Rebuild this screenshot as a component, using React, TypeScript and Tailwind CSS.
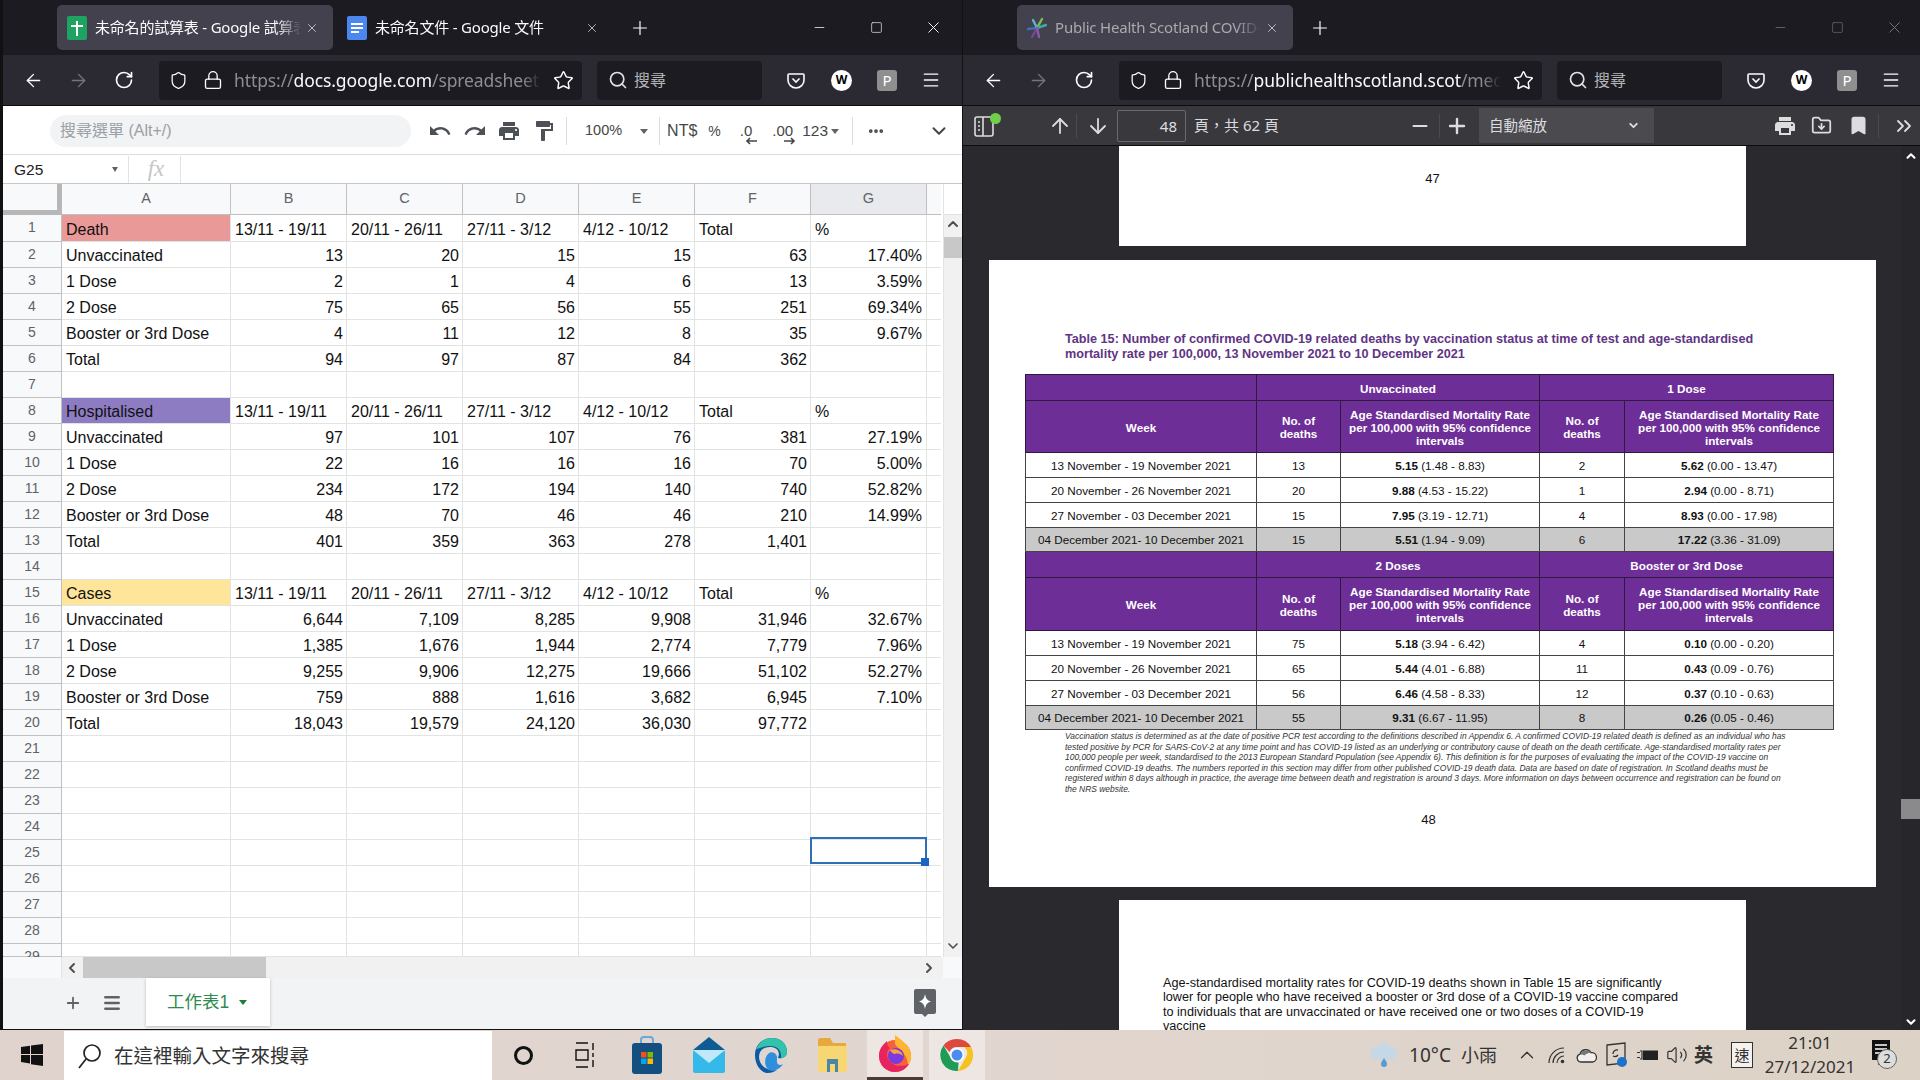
import React from "react";
import {
  ArrowLeft, ArrowRight, RotateCw, Shield, Lock, Star, Search, Menu, Plus, Minus, X, Square,
  MoreHorizontal, ChevronDown, ChevronUp, ChevronLeft, ChevronRight,
  ArrowUp, ArrowDown, Bookmark, ChevronsRight, FolderDown, Volume2,
} from "lucide-react";

const UI = "font-['Noto_Sans','Noto_Sans_CJK_TC',sans-serif]";
const ARIAL = "font-['Liberation_Sans','Noto_Sans_CJK_TC',sans-serif]";

const Mat = ({ d, className, size = 24, fill = "#4d5156" }: { d: string; className?: string; size?: number; fill?: string }) => (
  <svg width={size} height={size} viewBox="0 0 24 24" fill={fill} className={className}><path d={d} /></svg>
);
const UNDO = "M12.5 8c-2.65 0-5.05.99-6.9 2.6L2 7v9h9l-3.62-3.62c1.39-1.16 3.16-1.88 5.12-1.88 3.54 0 6.55 2.31 7.6 5.5l2.37-.78C21.08 11.03 17.15 8 12.5 8z";
const REDO = "M18.4 10.6C16.55 8.99 14.15 8 11.5 8c-4.65 0-8.58 3.03-9.96 7.22L3.9 16c1.05-3.19 4.05-5.5 7.6-5.5 1.95 0 3.73.72 5.12 1.88L13 16h9V7l-3.6 3.6z";
const PRINT = "M19 8H5c-1.66 0-3 1.34-3 3v6h4v4h12v-4h4v-6c0-1.66-1.34-3-3-3zm-3 11H8v-5h8v5zm3-7c-.55 0-1-.45-1-1s.45-1 1-1 1 .45 1 1-.45 1-1 1zm-1-9H6v4h12V3z";
const PAINT = "M18 4V3c0-.55-.45-1-1-1H5c-.55 0-1 .45-1 1v4c0 .55.45 1 1 1h12c.55 0 1-.45 1-1V6h1v4H9v11c0 .55.45 1 1 1h2c.55 0 1-.45 1-1v-9h8V4h-3z";

const Pocket = () => (
  <svg width="18" height="18" viewBox="0 0 18 18" fill="none" stroke="#fbfbfe" strokeWidth="1.6">
    <path d="M2 3h14a1 1 0 0 1 1 1v5a8 8 0 0 1-16 0V4a1 1 0 0 1 1-1z" />
    <path d="M5.5 7.5 9 11l3.5-3.5" />
  </svg>
);

const SheetsIcon = () => (
  <svg width="20" height="24" viewBox="0 0 20 24">
    <rect width="20" height="24" rx="2" fill="#1ea362" />
    <path d="M10 5v15M4 10h12" stroke="#fff" strokeWidth="2" />
  </svg>
);
const DocsIcon = () => (
  <svg width="20" height="24" viewBox="0 0 20 24">
    <rect width="20" height="24" rx="2" fill="#4b87ee" />
    <path d="M4 8h12M4 12h12M4 16h8" stroke="#fff" strokeWidth="2" />
  </svg>
);
const PhsIcon = () => (
  <svg width="20" height="22" viewBox="0 0 20 22" strokeWidth="2.4" fill="none" strokeLinecap="round">
    <path d="M10 11 15 2" stroke="#7bbf4c" />
    <path d="M10 11 19 8" stroke="#3fa9a6" />
    <path d="M10 11 1 12" stroke="#3f6fb0" />
    <path d="M10 11 6 3" stroke="#5db5c9" />
    <path d="M10 11 5 20" stroke="#6d4a9c" />
    <path d="M10 11 12 20" stroke="#8a5aa8" />
  </svg>
);

function Chrome({ children, dim, url }: { children: React.ReactNode; dim?: boolean; url: React.ReactNode }) {
  const wc = dim ? "text-[#77767c] -mr-[3px]" : "text-[#fbfbfe]";
  return (
    <>
      <div className={`h-[55px] bg-[#1c1b22] flex items-start pt-[5px] ${UI}`}>
        <div className="w-[54px] shrink-0" />
        <div className="flex-1 flex h-[45px]">{children}</div>
        <div className={`flex items-center h-[45px] ${wc}`}>
          <div className="w-[57px] flex justify-center"><Minus size={15} strokeWidth={1.2} /></div>
          <div className="w-[57px] flex justify-center"><Square size={13} strokeWidth={1.2} /></div>
          <div className="w-[57px] flex justify-center"><X size={19} strokeWidth={1.2} /></div>
        </div>
      </div>
      <div className={`h-[51px] bg-[#2b2a33] border-b border-[#0c0c0d] flex items-center text-[#fbfbfe] ${UI}`}>
        <div className="w-[60px] flex justify-center -mr-[15px]"><ArrowLeft size={21} strokeWidth={1.6} /></div>
        <div className="w-[60px] flex justify-center text-[#75747c] -mr-[15px]"><ArrowRight size={21} strokeWidth={1.6} /></div>
        <div className="w-[62px] flex justify-center"><RotateCw size={20} strokeWidth={2} /></div>
        <div className="ml-[4px] w-[423px] h-[39px] rounded bg-[#1c1b22] flex items-center">
          <div className="w-[38px] flex justify-center"><Shield size={19} strokeWidth={1.6} /></div>
          <div className="w-[32px] flex justify-center"><Lock size={20} strokeWidth={1.6} /></div>
          <div className="w-[307px] overflow-hidden whitespace-nowrap text-[17.5px] tracking-[-0.1px] ml-[5px] text-[#8e8d94] [mask-image:linear-gradient(to_right,black_94%,transparent)]">{url}</div>
          <div className="ml-[12px]"><Star size={21} strokeWidth={1.7} /></div>
        </div>
        <div className="ml-[15px] w-[165px] h-[39px] rounded bg-[#1c1b22] flex items-center pl-[11px] text-[16px] text-[#b5b5b8]">
          <Search size={20} strokeWidth={2} className="text-[#e0e0e6]" />
          <span className="ml-[6px]">搜尋</span>
        </div>
        <div className="ml-[25px] w-[20px]"><Pocket /></div>
        <div className="ml-[24px] w-[21px] h-[21px] rounded-full bg-white text-black text-[12px] font-bold flex items-center justify-center">W</div>
        <div className="ml-[25px] w-[20px] h-[21px] rounded-[3px] bg-[#8f8f8f] text-white text-[15px] flex items-center justify-center">P</div>
        <div className="ml-[24px]"><Menu size={20} strokeWidth={1.6} /></div>
      </div>
    </>
  );
}

function Tab({ icon, title, active, w, dim }: { icon: React.ReactNode; title: string; active?: boolean; w: string; dim?: boolean }) {
  return (
    <div className={`h-[45px] ${w} rounded-[5px] flex items-center pl-[10px] pr-[14px] ${active ? "bg-[#42414d]" : ""} ${dim ? "text-[#aaa9ae]" : "text-[#fbfbfe]"}`}>
      <div className="shrink-0 flex">{icon}</div>
      <div className="flex-1 min-w-0 ml-[8px] overflow-hidden whitespace-nowrap text-[15px] tracking-[-0.2px] [mask-image:linear-gradient(to_right,black_88%,transparent)]">{title}</div>
      <X size={14} strokeWidth={1.4} className="shrink-0 ml-[4px] text-[#d4d4d8]" />
    </div>
  );
}

const HEAD = ["13/11 - 19/11", "20/11 - 26/11", "27/11 - 3/12", "4/12 - 10/12", "Total", "%"];
const COLS = ["A", "B", "C", "D", "E", "F", "G"];
const sec = (name: string, bg: string, rows: (string | number)[][]) => [
  [{ t: name, bg }, ...HEAD],
  ...rows,
];
const blank = [""];
const DATA: any[][] = [
  ...sec("Death", "bg-[#ea9999]", [
    ["Unvaccinated", "13", "20", "15", "15", "63", "17.40%"],
    ["1 Dose", "2", "1", "4", "6", "13", "3.59%"],
    ["2 Dose", "75", "65", "56", "55", "251", "69.34%"],
    ["Booster or 3rd Dose", "4", "11", "12", "8", "35", "9.67%"],
    ["Total", "94", "97", "87", "84", "362", ""],
  ]),
  blank,
  ...sec("Hospitalised", "bg-[#8e7cc3]", [
    ["Unvaccinated", "97", "101", "107", "76", "381", "27.19%"],
    ["1 Dose", "22", "16", "16", "16", "70", "5.00%"],
    ["2 Dose", "234", "172", "194", "140", "740", "52.82%"],
    ["Booster or 3rd Dose", "48", "70", "46", "46", "210", "14.99%"],
    ["Total", "401", "359", "363", "278", "1,401", ""],
  ]),
  blank,
  ...sec("Cases", "bg-[#ffe599]", [
    ["Unvaccinated", "6,644", "7,109", "8,285", "9,908", "31,946", "32.67%"],
    ["1 Dose", "1,385", "1,676", "1,944", "2,774", "7,779", "7.96%"],
    ["2 Dose", "9,255", "9,906", "12,275", "19,666", "51,102", "52.27%"],
    ["Booster or 3rd Dose", "759", "888", "1,616", "3,682", "6,945", "7.10%"],
    ["Total", "18,043", "19,579", "24,120", "36,030", "97,772", ""],
  ]),
];

const GRID = "grid grid-cols-[59px_169px_116px_116px_116px_116px_116px_116px_14px]";

function SheetRow({ n, cells }: { n: number; cells: any[] }) {
  const h = n === 1 ? "h-[27px]" : n === 29 ? "h-[13px] overflow-hidden" : "h-[26px]";
  const header = n === 1 || n === 8 || n === 15;
  return (
    <div className={`${GRID} grid-rows-[minmax(0,1fr)] ${h}`}>
      <div className="min-h-0 bg-[#f8f9fa] border-r border-b border-[#c0c0c0] text-[#5f6368] text-[14px] flex justify-center pt-[4px] leading-[16px]">{n}</div>
      {COLS.map((c, i) => {
        const v = cells[i];
        const isObj = v && typeof v === "object";
        const text = isObj ? v.t : v ?? "";
        return (
          <div
            key={c}
            className={`min-h-0 border-r border-b border-[#e2e3e3] text-[16px] leading-[25px] pl-[4px] ${n === 1 ? "pt-[2px]" : "pt-[1px]"} ${i === 6 ? "pr-[4px]" : "pr-[3px]"} whitespace-nowrap text-[#111] ${isObj ? v.bg : ""} ${i === 0 || header ? "text-left" : "text-right"}`}
          >
            {text}
          </div>
        );
      })}
      <div className="min-h-0 border-b border-[#e2e3e3]" />
    </div>
  );
}

function Sheet() {
  const rows = Array.from({ length: 29 }, (_, i) => i + 1);
  return (
    <div className={`flex-1 bg-white flex flex-col min-h-0 ${ARIAL}`}>
      <div className="h-[49px] pt-[2px] border-b border-[#dadce0] flex items-center text-[#444746]">
        <div className="ml-[47px] w-[361px] h-[32px] rounded-[16px] bg-[#f1f3f4] text-[#9aa0a6] text-[16px] pl-[10px] flex items-center">搜尋選單 (Alt+/)</div>
        <Mat d={UNDO} className="ml-[17px]" />
        <Mat d={REDO} className="ml-[11px]" />
        <Mat d={PRINT} className="ml-[10px]" />
        <Mat d={PAINT} className="ml-[11px]" />
        <div className="ml-[10px] w-px h-[28px] bg-[#dadce0]" />
        <span className="ml-[18px] text-[14.5px]">100%</span>
        <span className="ml-[18px] w-0 h-0 border-x-[4px] border-x-transparent border-t-[5px] border-t-[#5f6368]" />
        <div className="ml-[11px] w-px h-[28px] bg-[#dadce0]" />
        <span className="ml-[7px] text-[16px]">NT$</span>
        <span className="ml-[11px] text-[14px]">%</span>
        <span className="ml-[19px] text-[15px] relative">.0
          <svg width="12" height="8" viewBox="0 0 12 8" className="absolute left-[5px] top-[17px]"><path d="M12 4H2M5 1 2 4l3 3" fill="none" stroke="#444746" strokeWidth="1.6" /></svg>
        </span>
        <span className="ml-[20px] text-[15px] relative">.00
          <svg width="12" height="8" viewBox="0 0 12 8" className="absolute left-[12px] top-[17px]"><path d="M0 4h10M7 1l3 3-3 3" fill="none" stroke="#444746" strokeWidth="1.6" /></svg>
        </span>
        <span className="ml-[9px] text-[15.5px]">123</span>
        <span className="ml-[3px] w-0 h-0 border-x-[4px] border-x-transparent border-t-[5px] border-t-[#5f6368]" />
        <div className="ml-[13px] w-px h-[28px] bg-[#dadce0]" />
        <MoreHorizontal size={18} strokeWidth={3} className="ml-[14px]" />
        <ChevronDown size={22} strokeWidth={2.2} className="ml-[43px]" />
      </div>
      <div className="h-[29px] pt-[1px] border-b border-[#c7c7c7] flex items-center text-[15.5px] text-[#202124]">
        <span className="w-[109px] pl-[11px]">G25</span>
        <span className="w-0 h-0 border-x-[3px] border-x-transparent border-t-[5px] border-t-[#5f6368]" />
        <div className="ml-[10px] w-px h-full bg-[#e2e3e3]" />
        <span className="w-[51px] pl-[3px] text-center font-['Liberation_Serif',serif] italic text-[23px] text-[#c4c7c5]">fx</span>
        <div className="w-px h-full bg-[#e2e3e3]" />
      </div>
      <div className="flex-1 min-h-0 flex">
        <div className="flex-1 min-w-0 overflow-hidden relative">
          <div className={`${GRID} h-[31px] text-[14.5px] text-[#5f6368]`}>
            <div className="bg-[#f8f9fa] border-b-[5px] border-r-[5px] border-[#b7b7b7]" />
            {COLS.map((c) => (
              <div key={c} className={`border-r border-b border-[#c0c0c0] flex items-center justify-center ${c === "G" ? "bg-[#e8eaed]" : "bg-[#f8f9fa]"}`}>{c}</div>
            ))}
            <div className="bg-[#f8f9fa] border-b border-[#c0c0c0]" />
          </div>
          {rows.map((n) => (
            <SheetRow key={n} n={n} cells={DATA[n - 1] ?? []} />
          ))}
          <div className="absolute left-[807px] top-[653px] w-[117px] h-[27px] border-2 border-[#2f6fb5]" />
          <div className="absolute left-[918px] top-[674px] w-[8px] h-[8px] bg-[#1a66c2]" />
        </div>
        <div className="w-[19px] shrink-0 bg-[#f1f1f1] flex flex-col items-center text-[#505050] border-l border-[#e2e3e3]">
          <div className="h-[31px] w-full bg-white border-b border-[#e2e3e3]" />
          <ChevronUp size={16} strokeWidth={3} className="mt-[1px]" />
          <div className="mt-[5px] h-[21px] w-full bg-[#c8c8c8]" />
          <div className="flex-1" />
          <ChevronDown size={16} strokeWidth={2.5} className="mb-[3px]" />
        </div>
      </div>
      <div className="h-[21px] bg-[#f1f1f1] flex items-center text-[#505050]">
        <div className="w-[59px] h-full bg-[#f8f9fa] border-r border-[#e2e3e3]" />
        <ChevronLeft size={16} strokeWidth={3} className="ml-[2px]" />
        <div className="ml-[3px] w-[183px] h-full bg-[#c8c8c8]" />
        <div className="flex-1" />
        <ChevronRight size={16} strokeWidth={3} />
        <div className="ml-[6px] w-[19px] h-full bg-[#f8f9fa]" />
      </div>
      <div className="h-[51px] bg-[#f1f3f4] flex items-start text-[#5f6368]">
        <Plus size={18} strokeWidth={2.4} className="ml-[61px] mt-[16px]" />
        <Menu size={20} strokeWidth={3} className="ml-[20px] mt-[15px]" />
        <div className="ml-[24px] w-[124px] h-[48px] bg-white shadow-[0_1px_3px_rgba(60,64,67,0.3)] flex items-center pl-[21px] text-[#2f8a4e] text-[17.5px]">
          工作表1
          <span className="ml-[10px] w-0 h-0 border-x-[4px] border-x-transparent border-t-[5px] border-t-[#188038]" />
        </div>
        <div className="flex-1" />
        <svg width="22" height="29" viewBox="0 0 22 29" className="mr-[26px] mt-[11px]">
          <path d="M2 0h18a2 2 0 0 1 2 2v21a2 2 0 0 1-2 2h-6l-3 3-3-3H2a2 2 0 0 1-2-2V2a2 2 0 0 1 2-2z" fill="#5f6368" />
          <path d="M11 5c1 5 2 6 6 7.500-4 1.500-5 2.500-6 7.500-1-5-2-6-6-7.500 4-1.500 5-2.500 6-7.500z" fill="#fff" />
        </svg>
      </div>
    </div>
  );
}

const UNV = [
  ["13 November - 19 November 2021", "13", "5.15", "(1.48 - 8.83)", "2", "5.62", "(0.00 - 13.47)"],
  ["20 November - 26 November 2021", "20", "9.88", "(4.53 - 15.22)", "1", "2.94", "(0.00 - 8.71)"],
  ["27 November - 03 December 2021", "15", "7.95", "(3.19 - 12.71)", "4", "8.93", "(0.00 - 17.98)"],
  ["04 December 2021- 10 December 2021", "15", "5.51", "(1.94 - 9.09)", "6", "17.22", "(3.36 - 31.09)"],
];
const DOS = [
  ["13 November - 19 November 2021", "75", "5.18", "(3.94 - 6.42)", "4", "0.10", "(0.00 - 0.20)"],
  ["20 November - 26 November 2021", "65", "5.44", "(4.01 - 6.88)", "11", "0.43", "(0.09 - 0.76)"],
  ["27 November - 03 December 2021", "56", "6.46", "(4.58 - 8.33)", "12", "0.37", "(0.10 - 0.63)"],
  ["04 December 2021- 10 December 2021", "55", "9.31", "(6.67 - 11.95)", "8", "0.26", "(0.05 - 0.46)"],
];

const TH = "border border-[#2d1a3d] bg-[#6e2e98] text-white font-bold text-center p-0 pt-[1px] leading-[13px]";
const TD = "border border-[#444] text-center p-0 pt-[1px] text-[#111]";

function Block({ a, b, rows, tall }: { a: string; b: string; rows: string[][]; tall?: boolean }) {
  return (
    <>
      <tr className="h-[26px]">
        <th className={TH}></th>
        <th className={TH} colSpan={2}>{a}</th>
        <th className={TH} colSpan={2}>{b}</th>
      </tr>
      <tr className={tall ? "h-[53px]" : "h-[52px]"}>
        <th className={TH}>Week</th>
        <th className={TH}>No. of<br />deaths</th>
        <th className={TH}>Age Standardised Mortality Rate<br />per 100,000 with 95% confidence<br />intervals</th>
        <th className={TH}>No. of<br />deaths</th>
        <th className={TH}>Age Standardised Mortality Rate<br />per 100,000 with 95% confidence<br />intervals</th>
      </tr>
      {rows.map((r, i) => (
        <tr key={r[0] + i} className={i === 3 ? "h-[24px] bg-[#c9c9c9]" : "h-[25px] bg-white"}>
          <td className={TD}>{r[0]}</td>
          <td className={TD}>{r[1]}</td>
          <td className={TD}><b>{r[2]}</b> {r[3]}</td>
          <td className={TD}>{r[4]}</td>
          <td className={TD}><b>{r[5]}</b> {r[6]}</td>
        </tr>
      ))}
    </>
  );
}

function Pdf() {
  return (
    <div className={`flex-1 min-h-0 bg-[#2a2a2e] overflow-hidden relative ${ARIAL}`}>
      <div className="flex flex-col items-center w-[939px]">
        <div className="w-[627px] h-[100px] bg-white text-center text-[13px] text-[#111] pt-[23px]">47</div>
        <div className="mt-[14px] w-[887px] h-[627px] bg-white pt-[72px] text-[#111]">
          <div className="pl-[76px] text-[12.65px] font-bold leading-[15px] text-[#5f3585] whitespace-nowrap">
            Table 15: Number of confirmed COVID-19 related deaths by vaccination status at time of test and age-standardised<br />
            mortality rate per 100,000, 13 November 2021 to 10 December 2021
          </div>
          <div className="ml-[36px] mt-[12px]">
            <table className="table-fixed border-collapse w-[808px] text-[11.7px]">
              <colgroup>
                <col className="w-[231px]" /><col className="w-[84px]" /><col className="w-[199px]" /><col className="w-[85px]" /><col className="w-[209px]" />
              </colgroup>
              <tbody>
                <Block a="Unvaccinated" b="1 Dose" rows={UNV} />
                <Block a="2 Doses" b="Booster or 3rd Dose" rows={DOS} tall />
              </tbody>
            </table>
          </div>
          <div className="pl-[76px] text-[8.45px] italic leading-[10.5px] whitespace-nowrap text-[#333] mt-[1px]">
            Vaccination status is determined as at the date of positive PCR test according to the definitions described in Appendix 6. A confirmed COVID-19 related death is defined as an individual who has<br />
            tested positive by PCR for SARS-CoV-2 at any time point and has COVID-19 listed as an underlying or contributory cause of death on the death certificate. Age-standardised mortality rates per<br />
            100,000 people per week, standardised to the 2013 European Standard Population (see Appendix 6). This definition is for the purposes of evaluating the impact of the COVID-19 vaccine on<br />
            confirmed COVID-19 deaths. The numbers reported in this section may differ from other published COVID-19 death data. Data are based on date of registration. In Scotland deaths must be<br />
            registered within 8 days although in practice, the average time between death and registration is around 3 days. More information on days between occurrence and registration can be found on<br />
            the NRS website.
          </div>
          <div className="text-center text-[13px] mt-[16px] pr-[8px]">48</div>
        </div>
        <div className="mt-[13px] w-[627px] h-[130px] bg-white pt-[76px] pl-[44px] text-[12.65px] leading-[14.4px] text-[#111] whitespace-nowrap overflow-hidden">
          Age-standardised mortality rates for COVID-19 deaths shown in Table 15 are significantly<br />
          lower for people who have received a booster or 3rd dose of a COVID-19 vaccine compared<br />
          to individuals that are unvaccinated or have received one or two doses of a COVID-19<br />
          vaccine
        </div>
      </div>
      <div className="absolute right-0 top-0 bottom-0 w-[19px] bg-[#27272b] flex flex-col items-center text-white">
        <ChevronUp size={14} strokeWidth={3.5} className="mt-[3px]" />
        <div className="mt-[636px] h-[20px] w-full bg-[#8a8a8d]" />
        <div className="flex-1" />
        <ChevronDown size={14} strokeWidth={3.5} className="mb-[1px]" />
      </div>
    </div>
  );
}

function PdfBar() {
  return (
    <div className={`h-[40px] bg-[#38383d] border-b border-[#0c0c0d] flex items-center text-[#dddde0] ${UI}`}>
      <div className="ml-[11px] relative">
        <svg width="20" height="24" viewBox="0 0 20 24" fill="none" stroke="#dddde0" strokeWidth="1.6"><rect x="1" y="3" width="18" height="19" rx="2" /><path d="M9 3v19M4 8h2M4 12h2M4 16h2" /></svg>
        <span className="absolute -right-[7px] -top-[1px] w-[11px] h-[11px] rounded-full bg-[#6fcf4a]" />
      </div>
      <ArrowUp size={24} strokeWidth={1.8} className="ml-[54px]" />
      <div className="ml-[4px] w-px h-[24px] bg-[#4a4a4f]" />
      <ArrowDown size={24} strokeWidth={1.8} className="ml-[9px]" />
      <div className="ml-[7px] w-[69px] h-[32px] rounded-[2px] border border-[#6a6a6e] bg-[#38383d] text-right pr-[8px] leading-[30px] text-[15px]">48</div>
      <span className="ml-[8px] text-[15px] whitespace-nowrap">頁，共 62 頁</span>
      <Minus size={22} strokeWidth={2.4} className="ml-[130px]" />
      <div className="ml-[8px] w-px h-[24px] bg-[#4a4a4f]" />
      <Plus size={24} strokeWidth={2.4} className="ml-[5px]" />
      <div className="ml-[10px] w-[175px] h-[35px] bg-[#4a4a4f] flex items-center pl-[10px] pr-[14px] text-[14.5px] justify-between">
        自動縮放
        <ChevronDown size={13} strokeWidth={3.5} />
      </div>
      <Mat d={PRINT} fill="#dddde0" className="ml-[119px]" />
      <FolderDown size={21} strokeWidth={2} className="ml-[14px]" />
      <Bookmark size={21} strokeWidth={2} fill="#dddde0" className="ml-[16px]" />
      <div className="ml-[9px] w-px h-[24px] bg-[#4a4a4f]" />
      <ChevronsRight size={24} strokeWidth={1.8} className="ml-[13px]" />
    </div>
  );
}

const Store = () => (
  <svg width="30" height="38" viewBox="0 0 30 38">
    <path d="M9 8V4a3 3 0 0 1 3-3h6a3 3 0 0 1 3 3v4" fill="none" stroke="#6ba7d8" strokeWidth="2" />
    <rect y="7" width="30" height="31" rx="3" fill="#14507f" />
    <rect x="9" y="16" width="5.500" height="5.500" fill="#f25022" />
    <rect x="15.500" y="16" width="5.500" height="5.500" fill="#7fba00" />
    <rect x="9" y="22.500" width="5.500" height="5.500" fill="#00a4ef" />
    <rect x="15.500" y="22.500" width="5.500" height="5.500" fill="#ffb900" />
  </svg>
);
const Mail = () => (
  <svg width="32" height="36" viewBox="0 0 32 36">
    <path d="M16 0 32 13H0z" fill="#0f5c94" />
    <rect y="13" width="32" height="23" rx="2" fill="#35b8ea" />
    <path d="M0 13h32L16 26z" fill="#bfe9fb" />
  </svg>
);
const Edge = () => (
  <svg width="34" height="36" viewBox="0 0 34 36">
    <path d="M1 18C1 8 8 1 18 1c9 0 15 6 15 14 0 5-5 7-9 6 3-7-2-11-8-11C9 10 5 14 5 20c0 8 8 15 18 13-3 2-6 3-9 3C7 36 1 28 1 18z" fill="#0c59a4" />
    <path d="M2 13C4 5 11 1 18 1c9 0 15 6 15 14 0 4-3 6-6 6 1-8-4-12-10-12-6 0-13 2-15 4z" fill="#32c3ab" />
    <path d="M14 17c4-4 10 0 9 5-1 6 3 7 6 5-3 5-9 8-14 6-5-3-5-12-1-16z" fill="#2f8fdc" />
  </svg>
);
const Files = () => (
  <svg width="30" height="34" viewBox="0 0 30 34">
    <path d="M2 0h10l3 5h13v10H0V2a2 2 0 0 1 2-2z" fill="#e8a93c" />
    <rect y="8" width="29" height="26" rx="1" fill="#f7d774" />
    <path d="M9 21h11v13h-3v-8h-5v8H9z" fill="#4a86a8" />
  </svg>
);
const Firefox = () => (
  <svg width="34" height="38" viewBox="0 0 34 38">
    <circle cx="17" cy="21" r="16" fill="#f5613b" />
    <path d="M17 0c8 6 16 12 16 21 0 4-1 7-3 9-1-12-8-14-13-21z" fill="#ffb62e" />
    <path d="M1 21C1 13 6 9 9 6c0 4 1 6 3 7-4 3-5 12 5 17 6 2 11 0 14-1-3 5-8 8-14 8-9 0-16-7-16-16z" fill="#e8245f" />
    <circle cx="18" cy="21" r="8" fill="#7a3ae0" />
    <path d="M12 15c5-2 12 0 13 6-2-2-5-3-8-2-2 0-4-2-5-4z" fill="#f9a03f" />
  </svg>
);
const ChromeIcon = () => (
  <svg width="34" height="34" viewBox="0 0 34 34">
    <path d="M17 1a16 16 0 0 1 14 8H17a8 8 0 0 0-7.500 5L3.500 7.500A16 16 0 0 1 17 1z" fill="#dc4a3d" />
    <path d="M31 9a16 16 0 0 1-13 24l7-12a8 8 0 0 0-1-12z" fill="#f6c21c" />
    <path d="M18 33A16 16 0 0 1 3.500 7.500l7 12a8 8 0 0 0 8 5z" fill="#1e9b56" />
    <circle cx="17" cy="17" r="7" fill="#fff" /><circle cx="17" cy="17" r="5.500" fill="#4a8cf0" />
  </svg>
);

function Taskbar() {
  const cell = "w-[62px] h-full flex items-center justify-center shrink-0";
  return (
    <div className={`h-[50px] bg-gradient-to-r from-[#e0d3cd] via-[#e2d6d0] to-[#dcd2c5] flex items-stretch overflow-hidden text-[#1a1a1a] ${UI}`}>
      <div className="w-[64px] flex items-center justify-center">
        <svg width="22" height="22" viewBox="0 0 22 22" fill="#111"><path d="M0 3l9-1.300V10H0zM10 1.500 22 0v10H10zM0 11h9v8.500L0 18zM10 11h12v11l-12-1.700z" /></svg>
      </div>
      <div className="w-[428px] bg-white flex items-center pl-[14px] mt-px">
        <svg width="24" height="26" viewBox="0 0 24 26" fill="none" stroke="#222" strokeWidth="1.7"><circle cx="14" cy="10" r="8" /><path d="M8 16 1 25" /></svg>
        <span className="ml-[12px] text-[19.5px] text-[#333]">在這裡輸入文字來搜尋</span>
      </div>
      <div className={cell}><div className="w-[19px] h-[19px] rounded-full border-[3px] border-[#111]" /></div>
      <div className={cell}>
        <svg width="22" height="26" viewBox="0 0 22 26" fill="none" stroke="#111" strokeWidth="1.4"><path d="M2 1h12M2 25h12M2 8h12v10H2zM19 1v7M19 11v4M19 18v7" /></svg>
      </div>
      <div className={cell}><Store /></div>
      <div className={cell}><Mail /></div>
      <div className={cell}><Edge /></div>
      <div className={cell}><Files /></div>
      <div className={cell}>
        <div className="w-[56px] h-full bg-[#eee6e2] border-b-[3px] border-[#4a3b35] flex items-center justify-center"><Firefox /></div>
      </div>
      <div className={cell}>
        <div className="w-[56px] h-full bg-[#eee6e2] flex items-center justify-center"><ChromeIcon /></div>
      </div>
      <div className="flex-1" />
      <div className="flex items-center text-[#333]">
        <svg width="30" height="28" viewBox="0 0 30 28"><path d="M7 18a6 6 0 0 1 1-12 8 8 0 0 1 14 1 5.500 5.500 0 0 1 1 11z" fill="#c5d8e8" /><path d="M15 17c-2 3-3 4-3 6a3 3 0 0 0 6 0c0-2-1-3-3-6z" fill="#4e9fd8" /></svg>
        <span className="ml-[10px] text-[19px] whitespace-nowrap">10°C</span>
        <span className="ml-[10px] text-[18px] whitespace-nowrap">小雨</span>
        <ChevronUp size={22} strokeWidth={1.4} className="ml-[19px]" />
        <svg width="20" height="20" viewBox="0 0 20 20" fill="none" stroke="#333" strokeWidth="1.2" className="ml-[9px]">
          <path d="M2 18A15 15 0 0 1 17 3M6 18A11 11 0 0 1 17 7M10 18a7 7 0 0 1 7-7" />
          <circle cx="15.500" cy="16.500" r="1.800" fill="#333" stroke="none" />
        </svg>
        <svg width="21" height="15" viewBox="0 0 21 15" className="ml-[9px]">
          <path d="M5 14a4 4 0 0 1-1-7.800 6 6 0 0 1 11-1.500A4.500 4.500 0 0 1 16.500 14z" fill="#f3efec" stroke="#333" strokeWidth="1.300" />
          <path d="M4.500 6.500a6 6 0 0 1 10.500-1.800c-3 0-6 2-6.500 2.800-1-.8-2.500-1-4-1z" fill="#777" />
        </svg>
        <svg width="22" height="26" viewBox="0 0 22 26" fill="none" stroke="#333" strokeWidth="1.300" className="ml-[9px]">
          <path d="M1 3 19 1v20L1 23z" />
          <path d="M12 8a4 4 0 0 0-5 4M7 14a4 4 0 0 0 5-1" />
          <circle cx="16" cy="20" r="5" fill="#1a73c8" stroke="none" />
        </svg>
        <svg width="22" height="14" viewBox="0 0 22 14" className="ml-[9px]">
          <path d="M0 4.500h3M0 9.500h3M3 3h2v8H3" fill="none" stroke="#333" strokeWidth="1.200" />
          <rect x="6" y="2.500" width="15" height="9.500" fill="#222" />
        </svg>
        <Volume2 size={22} strokeWidth={1.3} className="ml-[7px]" />
        <span className="ml-[6px] text-[19px] font-bold">英</span>
        <span className="ml-[18px] w-[22px] h-[26px] border border-[#333] bg-white/70 text-[15px] flex items-center justify-center">速</span>
        <div className="ml-[13px] w-[88px] flex flex-col items-center text-[17px] leading-[24px]">
          <span>21:01</span>
          <span>27/12/2021</span>
        </div>
        <div className="ml-[18px] mr-[30px] relative w-[18px] h-[30px]">
          <svg width="18" height="26" viewBox="0 0 18 26" fill="#111"><path d="M0 0h18v20h-6l-6 5v-5H0z" /><path d="M3 5h12M3 9h12M3 13h8" stroke="#fff" strokeWidth="1.500" /></svg>
          <span className="absolute left-[5px] top-[9px] w-[20px] h-[20px] rounded-full border border-[#666] bg-[#ddd] text-[13px] flex items-center justify-center">2</span>
        </div>
      </div>
    </div>
  );
}

export default function App() {
  return (
    <div className="w-[1920px] h-[1080px] overflow-hidden flex flex-col bg-black">
      <div className="h-[1030px] flex min-h-0">
        <div className="w-[963px] flex flex-col border-l-[3px] border-r border-[#111] border-b bg-white">
          <Chrome url={<>https://<span className="text-[#fbfbfe]">docs.google.com</span>/spreadsheet</>}>
            <Tab active w="w-[276px]" icon={<SheetsIcon />} title="未命名的試算表 - Google 試算表" />
            <div className="ml-[4px]" />
            <Tab w="w-[276px]" icon={<DocsIcon />} title="未命名文件 - Google 文件" />
            <div className="ml-[16px] h-full flex items-center text-[#fbfbfe]"><Plus size={22} strokeWidth={1.3} /></div>
          </Chrome>
          <Sheet />
        </div>
        <div className="flex-1 flex flex-col min-w-0">
          <Chrome dim url={<>https://<span className="text-[#fbfbfe]">publichealthscotland.scot</span>/media</>}>
            <Tab active dim w="w-[276px]" icon={<PhsIcon />} title="Public Health Scotland COVID-19" />
            <div className="ml-[16px] h-full flex items-center text-[#fbfbfe]"><Plus size={22} strokeWidth={1.3} /></div>
          </Chrome>
          <PdfBar />
          <Pdf />
        </div>
      </div>
      <Taskbar />
    </div>
  );
}
